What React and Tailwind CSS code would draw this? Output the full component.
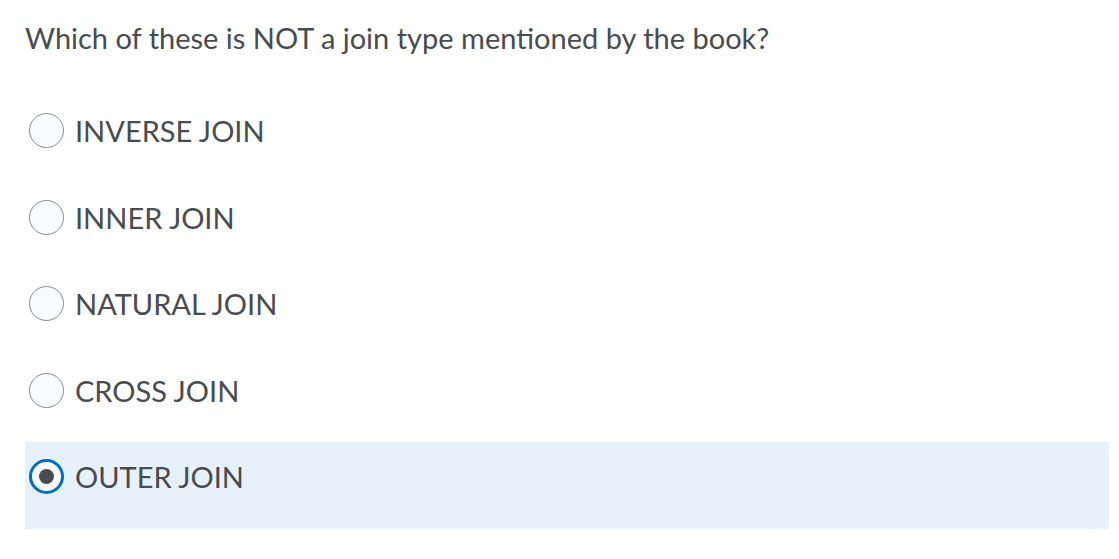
import { useState } from "react"

const options = ["INVERSE JOIN", "INNER JOIN", "NATURAL JOIN", "CROSS JOIN", "OUTER JOIN"]

export default function App() {
  const [selected, setSelected] = useState("OUTER JOIN")

  return (
    <div className="min-h-screen bg-white pl-[25px] pr-[10px] text-[#494c4e]" style={{ fontFamily: "Lato, 'Open Sans', sans-serif" }}>
      {/* Question */}
      <div className="h-[96px] pt-[19px]">
        <p className="text-[29px] leading-[38px]">Which of these is NOT a join type mentioned by the book?</p>
      </div>

      {/* Options */}
      <div className="flex flex-col gap-[17.5px]">
        {options.map((opt) => {
          const isOn = selected === opt
          return (
            <div key={opt} className={isOn ? "bg-[#e6f1fb] pb-[18px]" : ""}>
              <label
                onClick={() => setSelected(opt)}
                className="h-[69px] flex items-center pl-[4px] cursor-pointer"
              >
                {isOn ? (
                  <span className="w-[35px] h-[35px] rounded-full border-[3px] border-[#006fbf] bg-[#f9fbff] flex items-center justify-center shrink-0">
                    <span className="w-[15px] h-[15px] rounded-full bg-[#494c4e]" />
                  </span>
                ) : (
                  <span className="w-[35px] h-[35px] rounded-full border border-[#8a8c8e] bg-[#f9fbff] shrink-0" />
                )}
                <span className="ml-[11px] text-[29px] leading-none">{opt}</span>
              </label>
            </div>
          )
        })}
      </div>
    </div>
  )
}
